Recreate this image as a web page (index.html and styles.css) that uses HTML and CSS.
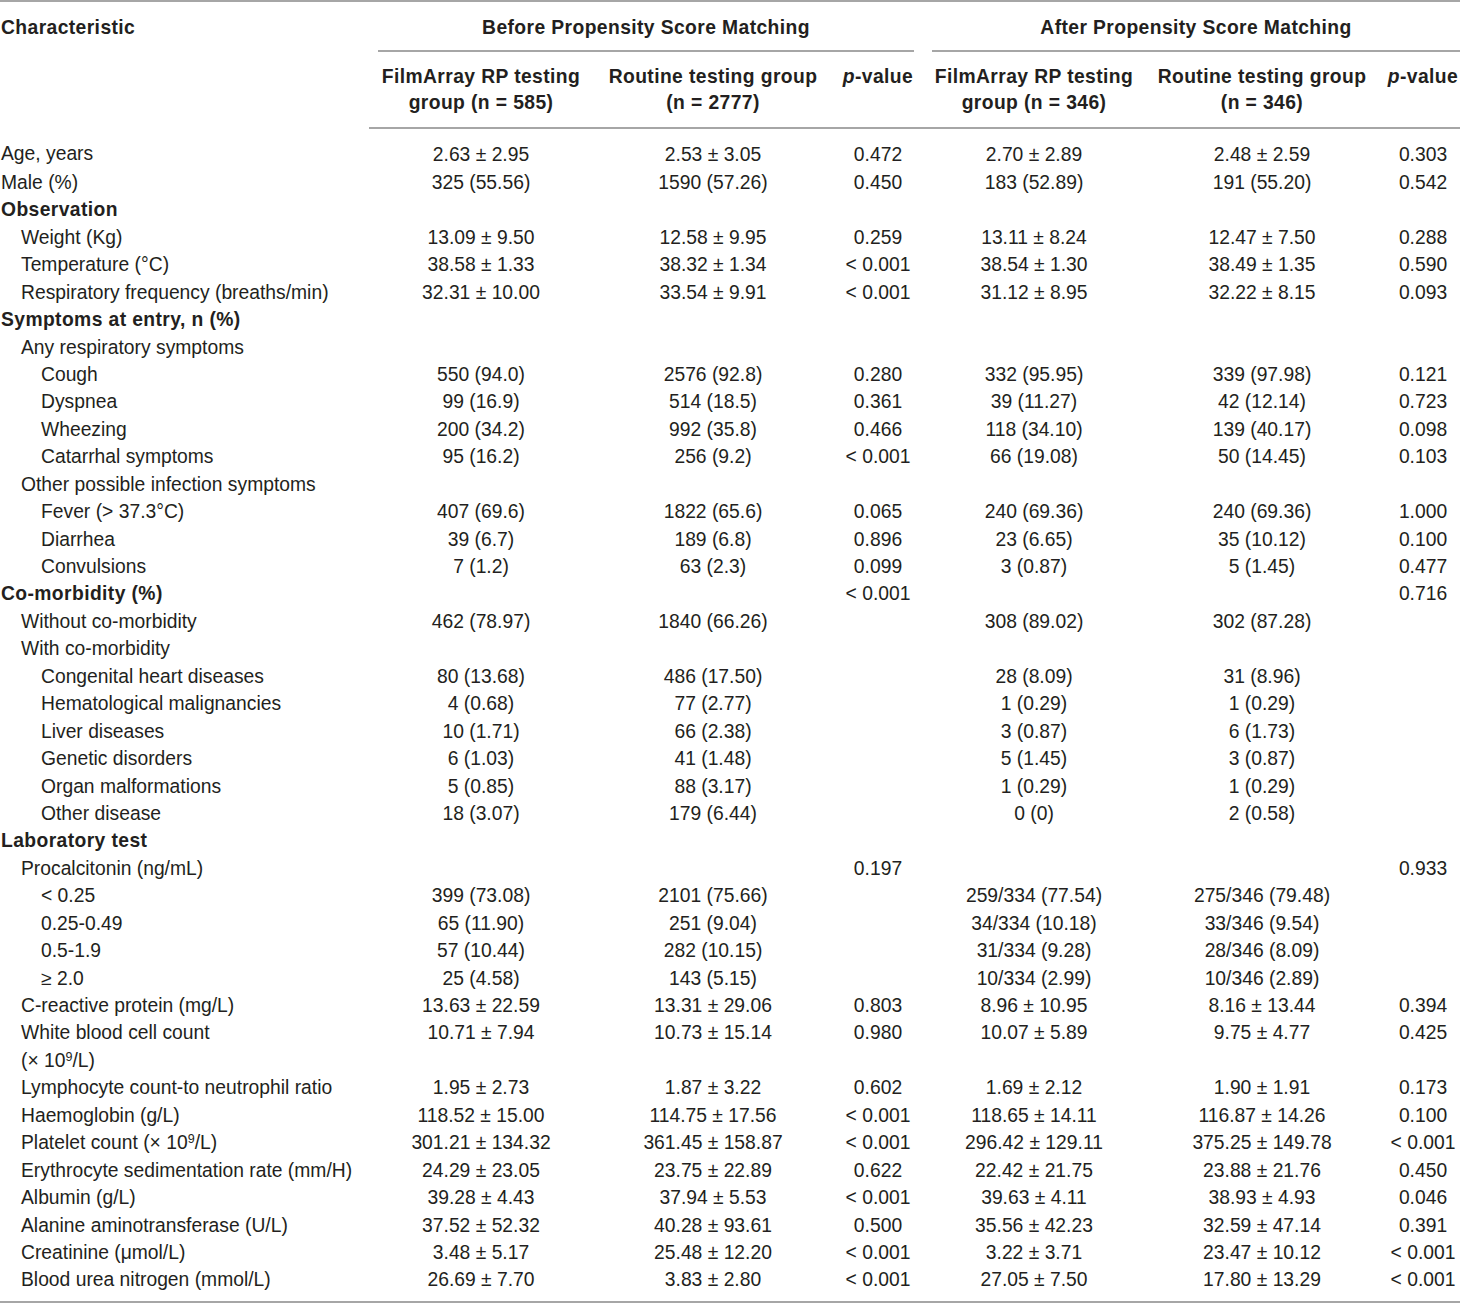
FILE: index.html
```html
<!DOCTYPE html>
<html lang="en">
<head>
<meta charset="utf-8">
<title>Table</title>
<link rel="stylesheet" href="styles.css">
</head>
<body>
<table class="tbl">
<colgroup>
<col class="c1"><col class="c2"><col class="c3"><col class="c4"><col class="c5"><col class="c6"><col class="c7">
</colgroup>
<thead>
<tr class="h1">
<th rowspan="2" class="lab">Characteristic</th>
<th colspan="3" class="span sp1"><div class="spanline">Before Propensity Score Matching</div></th>
<th colspan="3" class="span sp2"><div class="spanline">After Propensity Score Matching</div></th>
</tr>
<tr class="h2">
<th>FilmArray RP testing<br>group (n = 585)</th>
<th>Routine testing group<br>(n = 2777)</th>
<th><i>p</i>-value</th>
<th>FilmArray RP testing<br>group (n = 346)</th>
<th class="c6p">Routine testing group<br>(n = 346)</th>
<th><i>p</i>-value</th>
</tr>
</thead>
<tbody>
<tr class="first"><td class="l0">Age, years</td><td>2.63 ± 2.95</td><td>2.53 ± 3.05</td><td>0.472</td><td>2.70 ± 2.89</td><td class="c6p">2.48 ± 2.59</td><td>0.303</td></tr>
<tr><td class="l0">Male (%)</td><td>325 (55.56)</td><td>1590 (57.26)</td><td>0.450</td><td>183 (52.89)</td><td class="c6p">191 (55.20)</td><td>0.542</td></tr>
<tr><td class="l0 b">Observation</td><td></td><td></td><td></td><td></td><td></td><td></td></tr>
<tr><td class="l1">Weight (Kg)</td><td>13.09 ± 9.50</td><td>12.58 ± 9.95</td><td>0.259</td><td>13.11 ± 8.24</td><td class="c6p">12.47 ± 7.50</td><td>0.288</td></tr>
<tr><td class="l1">Temperature (°C)</td><td>38.58 ± 1.33</td><td>38.32 ± 1.34</td><td>&lt; 0.001</td><td>38.54 ± 1.30</td><td class="c6p">38.49 ± 1.35</td><td>0.590</td></tr>
<tr><td class="l1">Respiratory frequency (breaths/min)</td><td>32.31 ± 10.00</td><td>33.54 ± 9.91</td><td>&lt; 0.001</td><td>31.12 ± 8.95</td><td class="c6p">32.22 ± 8.15</td><td>0.093</td></tr>
<tr><td class="l0 b">Symptoms at entry, n (%)</td><td></td><td></td><td></td><td></td><td></td><td></td></tr>
<tr><td class="l1">Any respiratory symptoms</td><td></td><td></td><td></td><td></td><td></td><td></td></tr>
<tr><td class="l2">Cough</td><td>550 (94.0)</td><td>2576 (92.8)</td><td>0.280</td><td>332 (95.95)</td><td class="c6p">339 (97.98)</td><td>0.121</td></tr>
<tr><td class="l2">Dyspnea</td><td>99 (16.9)</td><td>514 (18.5)</td><td>0.361</td><td>39 (11.27)</td><td class="c6p">42 (12.14)</td><td>0.723</td></tr>
<tr><td class="l2">Wheezing</td><td>200 (34.2)</td><td>992 (35.8)</td><td>0.466</td><td>118 (34.10)</td><td class="c6p">139 (40.17)</td><td>0.098</td></tr>
<tr><td class="l2">Catarrhal symptoms</td><td>95 (16.2)</td><td>256 (9.2)</td><td>&lt; 0.001</td><td>66 (19.08)</td><td class="c6p">50 (14.45)</td><td>0.103</td></tr>
<tr><td class="l1">Other possible infection symptoms</td><td></td><td></td><td></td><td></td><td></td><td></td></tr>
<tr><td class="l2">Fever (&gt; 37.3°C)</td><td>407 (69.6)</td><td>1822 (65.6)</td><td>0.065</td><td>240 (69.36)</td><td class="c6p">240 (69.36)</td><td>1.000</td></tr>
<tr><td class="l2">Diarrhea</td><td>39 (6.7)</td><td>189 (6.8)</td><td>0.896</td><td>23 (6.65)</td><td class="c6p">35 (10.12)</td><td>0.100</td></tr>
<tr><td class="l2">Convulsions</td><td>7 (1.2)</td><td>63 (2.3)</td><td>0.099</td><td>3 (0.87)</td><td class="c6p">5 (1.45)</td><td>0.477</td></tr>
<tr><td class="l0 b">Co-morbidity (%)</td><td></td><td></td><td>&lt; 0.001</td><td></td><td class="c6p"></td><td>0.716</td></tr>
<tr><td class="l1">Without co-morbidity</td><td>462 (78.97)</td><td>1840 (66.26)</td><td></td><td>308 (89.02)</td><td class="c6p">302 (87.28)</td><td></td></tr>
<tr><td class="l1">With co-morbidity</td><td></td><td></td><td></td><td></td><td></td><td></td></tr>
<tr><td class="l2">Congenital heart diseases</td><td>80 (13.68)</td><td>486 (17.50)</td><td></td><td>28 (8.09)</td><td class="c6p">31 (8.96)</td><td></td></tr>
<tr><td class="l2">Hematological malignancies</td><td>4 (0.68)</td><td>77 (2.77)</td><td></td><td>1 (0.29)</td><td class="c6p">1 (0.29)</td><td></td></tr>
<tr><td class="l2">Liver diseases</td><td>10 (1.71)</td><td>66 (2.38)</td><td></td><td>3 (0.87)</td><td class="c6p">6 (1.73)</td><td></td></tr>
<tr><td class="l2">Genetic disorders</td><td>6 (1.03)</td><td>41 (1.48)</td><td></td><td>5 (1.45)</td><td class="c6p">3 (0.87)</td><td></td></tr>
<tr><td class="l2">Organ malformations</td><td>5 (0.85)</td><td>88 (3.17)</td><td></td><td>1 (0.29)</td><td class="c6p">1 (0.29)</td><td></td></tr>
<tr><td class="l2">Other disease</td><td>18 (3.07)</td><td>179 (6.44)</td><td></td><td>0 (0)</td><td class="c6p">2 (0.58)</td><td></td></tr>
<tr><td class="l0 b">Laboratory test</td><td></td><td></td><td></td><td></td><td></td><td></td></tr>
<tr><td class="l1">Procalcitonin (ng/mL)</td><td></td><td></td><td>0.197</td><td></td><td class="c6p"></td><td>0.933</td></tr>
<tr><td class="l2">&lt; 0.25</td><td>399 (73.08)</td><td>2101 (75.66)</td><td></td><td>259/334 (77.54)</td><td class="c6p">275/346 (79.48)</td><td></td></tr>
<tr><td class="l2">0.25-0.49</td><td>65 (11.90)</td><td>251 (9.04)</td><td></td><td>34/334 (10.18)</td><td class="c6p">33/346 (9.54)</td><td></td></tr>
<tr><td class="l2">0.5-1.9</td><td>57 (10.44)</td><td>282 (10.15)</td><td></td><td>31/334 (9.28)</td><td class="c6p">28/346 (8.09)</td><td></td></tr>
<tr><td class="l2">≥ 2.0</td><td>25 (4.58)</td><td>143 (5.15)</td><td></td><td>10/334 (2.99)</td><td class="c6p">10/346 (2.89)</td><td></td></tr>
<tr><td class="l1">C-reactive protein (mg/L)</td><td>13.63 ± 22.59</td><td>13.31 ± 29.06</td><td>0.803</td><td>8.96 ± 10.95</td><td class="c6p">8.16 ± 13.44</td><td>0.394</td></tr>
<tr><td class="l1">White blood cell count<br>(× 10<sup>9</sup>/L)</td><td>10.71 ± 7.94</td><td>10.73 ± 15.14</td><td>0.980</td><td>10.07 ± 5.89</td><td class="c6p">9.75 ± 4.77</td><td>0.425</td></tr>
<tr><td class="l1">Lymphocyte count-to neutrophil ratio</td><td>1.95 ± 2.73</td><td>1.87 ± 3.22</td><td>0.602</td><td>1.69 ± 2.12</td><td class="c6p">1.90 ± 1.91</td><td>0.173</td></tr>
<tr><td class="l1">Haemoglobin (g/L)</td><td>118.52 ± 15.00</td><td>114.75 ± 17.56</td><td>&lt; 0.001</td><td>118.65 ± 14.11</td><td class="c6p">116.87 ± 14.26</td><td>0.100</td></tr>
<tr><td class="l1">Platelet count (× 10<sup>9</sup>/L)</td><td>301.21 ± 134.32</td><td>361.45 ± 158.87</td><td>&lt; 0.001</td><td>296.42 ± 129.11</td><td class="c6p">375.25 ± 149.78</td><td>&lt; 0.001</td></tr>
<tr><td class="l1">Erythrocyte sedimentation rate (mm/H)</td><td>24.29 ± 23.05</td><td>23.75 ± 22.89</td><td>0.622</td><td>22.42 ± 21.75</td><td class="c6p">23.88 ± 21.76</td><td>0.450</td></tr>
<tr><td class="l1">Albumin (g/L)</td><td>39.28 ± 4.43</td><td>37.94 ± 5.53</td><td>&lt; 0.001</td><td>39.63 ± 4.11</td><td class="c6p">38.93 ± 4.93</td><td>0.046</td></tr>
<tr><td class="l1">Alanine aminotransferase (U/L)</td><td>37.52 ± 52.32</td><td>40.28 ± 93.61</td><td>0.500</td><td>35.56 ± 42.23</td><td class="c6p">32.59 ± 47.14</td><td>0.391</td></tr>
<tr><td class="l1">Creatinine (μmol/L)</td><td>3.48 ± 5.17</td><td>25.48 ± 12.20</td><td>&lt; 0.001</td><td>3.22 ± 3.71</td><td class="c6p">23.47 ± 10.12</td><td>&lt; 0.001</td></tr>
<tr class="last"><td class="l1">Blood urea nitrogen (mmol/L)</td><td>26.69 ± 7.70</td><td>3.83 ± 2.80</td><td>&lt; 0.001</td><td>27.05 ± 7.50</td><td class="c6p">17.80 ± 13.29</td><td>&lt; 0.001</td></tr>
</tbody>
</table>
</body>
</html>
```

FILE: styles.css
```css
html, body {
  margin: 0;
  padding: 0;
  background: #ffffff;
}

.tbl {
  width: 1460px;
  table-layout: fixed;
  border-collapse: collapse;
  font-family: "Liberation Sans", Arial, sans-serif;
  font-size: 19.3px;
  line-height: 27.43px;
  color: #231f20;
  border-top: 2px solid #a6a6a6;
  border-bottom: 2px solid #a6a6a6;
}

.c1 { width: 369px; }
.c2 { width: 224px; }
.c3 { width: 240px; }
.c4 { width: 90px; }
.c5 { width: 222px; }
.c6 { width: 241px; }
.c7 { width: 74px; }

.tbl th,
.tbl td {
  padding: 0;
  text-align: center;
  vertical-align: top;
  white-space: nowrap;
}

.tbl th {
  font-weight: bold;
  letter-spacing: 0.4px;
}

.tbl th.lab {
  text-align: left;
  padding: 12px 0 0 1px;
}

.h1 .span {
  padding: 12px 9px 0 9px;
}

.h1 .sp2 {
  padding-right: 0;
}

.spanline {
  padding-bottom: 9px;
  border-bottom: 2px solid #a6a6a6;
}

.h2 th {
  line-height: 26px;
  padding: 12px 0 11px 0;
  border-bottom: 2px solid #a6a6a6;
}

.h2 th.c6p,
.tbl td.c6p {
  padding-right: 7px;
}

.tbl td.l0,
.tbl td.l1,
.tbl td.l2 {
  text-align: left;
}

.tbl td.l0 { padding-left: 1px; }
.tbl td.l1 { padding-left: 21px; }
.tbl td.l2 { padding-left: 41px; }

.tbl td.b {
  font-weight: bold;
  letter-spacing: 0.4px;
}

.tbl tr.first td {
  padding-top: 12px;
}

.tbl tr.last td {
  padding-bottom: 7px;
}

.tbl sup {
  font-size: 0.65em;
  line-height: 0;
  vertical-align: 0.5em;
}
```
